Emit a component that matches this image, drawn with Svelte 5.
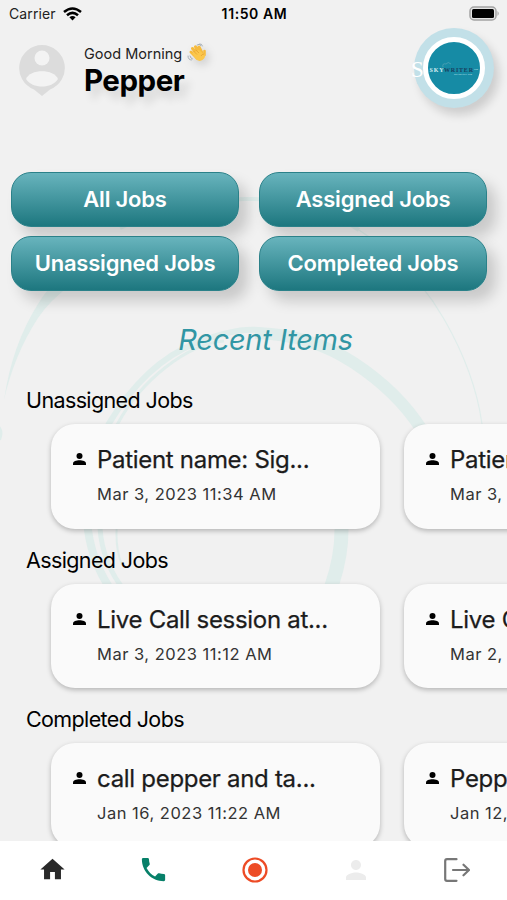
<script lang="ts">
	interface Job { title: string; date: string; }
	interface Section { name: string; jobs: Job[]; }

	const filters = ['All Jobs', 'Assigned Jobs', 'Unassigned Jobs', 'Completed Jobs'];

	const sections: Section[] = [
		{
			name: 'Unassigned Jobs',
			jobs: [
				{ title: 'Patient name: Sig...', date: 'Mar 3, 2023 11:34 AM' },
				{ title: 'Patient name: Sig...', date: 'Mar 3, 2023 11:30 AM' },
			],
		},
		{
			name: 'Assigned Jobs',
			jobs: [
				{ title: 'Live Call session at...', date: 'Mar 3, 2023 11:12 AM' },
				{ title: 'Live Call session at...', date: 'Mar 2, 2023 10:05 AM' },
			],
		},
		{
			name: 'Completed Jobs',
			jobs: [
				{ title: 'call pepper and ta...', date: 'Jan 16, 2023 11:22 AM' },
				{ title: 'Pepper call session...', date: 'Jan 12, 2023 11:02 AM' },
			],
		},
	];
</script>

<div class="phone">
	<!-- faint brush rings behind the content -->
	<svg class="rings" viewBox="0 0 507 584" aria-hidden="true">
		<g fill="none" stroke="#e0edeb">
			<path d="M0 440L0 428Q3 432 0 440" stroke-width="2" />
			<path d="M4 400Q12 345 38 304Q46 290 60 278L72 284Q50 300 38 318Q14 355 4 400Z" fill="#e0edeb" stroke="none" />
			<path d="M120 228Q180 200 245 199T359 230" stroke-width="4" />
			<path d="M359 230Q413 265 444 319T482 424" stroke-width="1.2" />
			<path d="M108 425Q145 363 196 343T270 333" stroke-width="6" />
			<path d="M117 425Q135 391 166 367T224 341" stroke-width="3" />
			<path d="M255 333Q310 334 354 363T422 430" stroke-width="12" />
			<path d="M87 500Q84 550 111 590" stroke-width="8" />
			<path d="M101 500Q94 552 124 590" stroke-width="5" />
			<path d="M120 500Q112 542 122 565" stroke-width="2" />
			<path d="M339 500Q347 545 330 590" stroke-width="14" />
		</g>
	</svg>

	<div class="status">
		<div class="carrier">
			<span>Carrier</span>
			<svg width="19" height="14" viewBox="0 0 19 14" fill="none" stroke="#000" stroke-width="2.5">
				<path d="M1 5Q9.500-2 18 5" />
				<path d="M4 8.300Q9.500 3.400 15 8.300" />
				<path d="M9.500 13.500L6.400 10.200Q9.500 7.800 12.600 10.200Z" fill="#000" stroke="none" />
			</svg>
		</div>
		<span class="clock">11:50 AM</span>
		<svg class="battery" width="31" height="15" viewBox="0 0 31 15">
			<rect x="1" y="1" width="26" height="13" rx="4" fill="#e4e4e4" stroke="#a3a3a3" stroke-width="1.500" />
			<rect x="3" y="3" width="22" height="9" rx="1.500" />
			<path d="M28.500 5Q31 7.500 28.500 10Z" fill="#a3a3a3" />
		</svg>
	</div>

	<header>
		<svg class="avatar" width="46" height="52" viewBox="0 0 46 52">
			<path d="M23 0A23 23 0 0 1 31 44.500L23 51L15 44.500A23 23 0 0 1 23 0Z" fill="#dcdcdc" />
			<circle cx="23" cy="13" r="7.500" fill="#f3f3f3" />
			<path d="M7 34C11 23.500 35 23.500 39 34C33 44 13 44 7 34Z" fill="#f3f3f3" />
		</svg>
		<div class="greeting">
			<div class="hello">
				<span>Good Morning</span>
				<svg width="20" height="20" viewBox="0 0 20 20">
					<g fill="none" stroke-linecap="round">
						<path d="M4 9L10 15M5.500 5.500L11 12M8.500 3.800L13 10M12 4L15 10" stroke="#f6bb3d" stroke-width="3" />
						<path d="M17.500 8V12" stroke="#f6bb3d" stroke-width="2.600" />
						<path d="M10 2Q12.500 0 14 2.500M12.500 1Q14.500 0 15.500 3M1 13Q1 17 4.500 17M3 13Q3.500 15.500 5.500 16" stroke="#a5adb5" stroke-width="1" />
					</g>
					<path d="M5 10L12 7L16 10.500Q19 11 17.500 15Q14 20 9 16.500Z" fill="#fbc74b" />
					<path d="M6.500 8L10 11.500M8.300 6.500L12 10M14 13Q15 11 17 11" stroke="#df9426" stroke-width=".6" fill="none" />
				</svg>
			</div>
			<h1>Pepper</h1>
		</div>
		<div class="logo">
			<span class="initial">S</span>
			<div class="disc">
				<svg viewBox="0 0 52 52" width="52" height="52">
					<path d="M15 25Q14 21 18 22Q20 19 23 22" fill="none" stroke="#73aebd" stroke-width=".5" />
					<text x="1.500" y="29.500" class="word" textLength="14" fill="#d6eef2">SKY</text>
					<text x="16" y="29.500" class="word" textLength="29" fill="#183d5e">WRITER</text>
					<text x="46" y="28" class="tiny" textLength="4">MD</text>
					<text x="26" y="32.500" class="tiny" textLength="18">Skywriter MD</text>
				</svg>
			</div>
		</div>
	</header>

	<div class="filters">
		{#each filters as name}
			<button>{name}</button>
		{/each}
	</div>

	<h2>Recent Items</h2>

	<main>
		{#each sections as section}
			<section>
				<h3>{section.name}</h3>
				<div class="row">
					{#each section.jobs as job}
						<article>
							<svg width="13" height="12" viewBox="0 0 13 12">
								<circle cx="6.500" cy="3" r="3" />
								<path d="M0 12V10.500C0 6.300 13 6.300 13 10.500V12Z" />
							</svg>
							<div>
								<p class="title">{job.title}</p>
								<p class="date">{job.date}</p>
							</div>
						</article>
					{/each}
				</div>
			</section>
		{/each}
	</main>

	<nav>
		<button aria-label="Home">
			<svg width="29" height="29" viewBox="0 0 24 24" fill="#292929">
				<path d="M10 20v-6h4v6h5v-8h3L12 3 2 12h3v8z" />
			</svg>
		</button>
		<button aria-label="Calls">
			<svg width="31" height="31" viewBox="0 0 24 24" fill="#078069">
				<path d="M6.620 10.790c1.440 2.830 3.760 5.140 6.590 6.590l2.200-2.200c.27-.27.67-.36 1.020-.24 1.120.37 2.330.57 3.570.57.55 0 1 .45 1 1V20c0 .55-.45 1-1 1-9.390 0-17-7.610-17-17 0-.55.45-1 1-1h3.500c.55 0 1 .45 1 1 0 1.250.2 2.450.57 3.570.11.35.03.74-.25 1.020z" />
			</svg>
		</button>
		<button aria-label="Record">
			<svg width="26" height="26" viewBox="0 0 26 26">
				<circle cx="13" cy="13" r="11.500" fill="none" stroke="#ed4b25" stroke-width="2.200" />
				<circle cx="13" cy="13" r="7" fill="#ed4b25" />
			</svg>
		</button>
		<button aria-label="Profile">
			<svg width="30" height="30" viewBox="0 0 24 24" fill="#ececec">
				<path d="M12 12c2.210 0 4-1.790 4-4s-1.790-4-4-4-4 1.790-4 4 1.790 4 4 4zm0 2c-2.670 0-8 1.340-8 4v2h16v-2c0-2.660-5.330-4-8-4z" />
			</svg>
		</button>
		<button aria-label="Log out">
			<svg width="26" height="24" viewBox="0 0 26 24" fill="none" stroke="#777" stroke-width="2.200" stroke-linecap="round" stroke-linejoin="round">
				<path d="M12.500 1.200H3Q1.200 1.200 1.200 3V21Q1.200 22.800 3 22.800H12.500M9 12H25M19.500 6.700L25 12L19.500 17.300" />
			</svg>
		</button>
	</nav>
</div>

<style>
	:global(body) {
		margin: 0;
	}

	.phone {
		position: relative;
		width: 507px;
		height: 900px;
		overflow: hidden;
		display: flex;
		flex-direction: column;
		background: #f1f1f1;
		font-family: Inter, "Liberation Sans", sans-serif;
		color: #000;
	}

	h1, h2, h3, p {
		margin: 0;
	}

	button {
		font: inherit;
		padding: 0;
		border: 0;
		background: none;
	}

	svg {
		display: block;
		flex: none;
	}

	.rings {
		position: absolute;
		top: 0;
		left: 0;
		width: 507px;
		height: 584px;
	}

	.status, header, .filters, h2, main, nav {
		position: relative;
		flex: none;
	}

	/* ── Status bar ── */
	.status {
		display: grid;
		grid-template-columns: 1fr auto 1fr;
		align-items: center;
		height: 27px;
		padding: 0 7px 0 9px;
		box-sizing: border-box;
		font-size: 14px;
	}
	.carrier {
		display: flex;
		align-items: center;
		gap: 7px;
		letter-spacing: 0.1px;
		color: #222;
	}
	.clock {
		font-weight: 600;
		font-size: 14px;
		letter-spacing: 0.6px;
	}
	.battery {
		justify-self: end;
	}

	/* ── Greeting ── */
	header {
		display: flex;
		align-items: flex-start;
		height: 145px;
		padding: 0 13px 0 19px;
	}
	.avatar {
		margin-top: 18px;
	}
	.greeting {
		margin: 16px 0 0 19px;
		flex: 1;
	}
	.hello {
		display: flex;
		align-items: center;
		gap: 5px;
		height: 20px;
		font-size: 14.5px;
		color: #222;
	}
	.hello svg {
		filter: drop-shadow(3px 4px 4px rgba(0, 0, 0, 0.15));
	}
	h1 {
		font-size: 29.5px;
		line-height: 35px;
		font-weight: 700;
		letter-spacing: -0.5px;
		text-shadow: 6px 8px 9px rgba(0, 0, 0, 0.12);
	}
	.logo {
		position: relative;
		display: grid;
		place-items: center;
		width: 80px;
		height: 80px;
		margin-top: 1px;
		border-radius: 50%;
		background: #c2e0e8;
		box-shadow: 5px 7px 10px rgba(0, 0, 0, 0.15);
	}
	.initial {
		position: absolute;
		left: -3px;
		top: 28px;
		font: 23px/28px "Liberation Serif", serif;
		color: #fff;
	}
	.disc {
		position: relative;
		width: 52px;
		height: 52px;
		border: 5px solid #fff;
		border-radius: 50%;
		background: #168ba5;
	}
	.word {
		font: bold 6px "Liberation Serif", serif;
	}
	.tiny {
		font: 2.5px "Liberation Sans", sans-serif;
		fill: #c3e7ed;
	}

	/* ── Filter buttons ── */
	.filters {
		display: grid;
		grid-template-columns: 228px 228px;
		gap: 9px 20px;
		padding-left: 11px;
	}
	.filters button {
		height: 55px;
		box-sizing: border-box;
		padding-bottom: 2px;
		border: 1.5px solid #2b8189;
		border-radius: 20px;
		background: linear-gradient(#68b4bd, #1d777f);
		box-shadow: 9px 10px 14px rgba(0, 0, 0, 0.17);
		color: #fff;
		font-size: 22px;
		font-weight: 600;
		letter-spacing: -0.2px;
	}

	h2 {
		margin: 31px 0 0 24px;
		font-size: 29px;
		line-height: 35px;
		font-style: italic;
		font-weight: 400;
		letter-spacing: -0.3px;
		text-align: center;
		color: #3196a4;
	}

	/* ── Job lists ── */
	main {
		flex: 1;
		min-height: 0;
		padding-top: 30px;
		overflow: hidden;
	}
	section {
		height: 159.5px;
	}
	h3 {
		padding-left: 26px;
		font-size: 21.5px;
		line-height: 26px;
		font-weight: 400;
		letter-spacing: -0.62px;
	}
	.row {
		display: flex;
		gap: 24px;
		padding: 11px 0 0 51px;
	}
	article {
		display: flex;
		flex: none;
		gap: 11px;
		width: 329px;
		height: 104.5px;
		padding-left: 22px;
		box-sizing: border-box;
		border-radius: 24px;
		background: #fafafa;
		box-shadow: 0 2px 5px rgba(0, 0, 0, 0.25);
	}
	article svg {
		margin-top: 29px;
	}
	.title {
		margin-top: 21px;
		font-size: 24px;
		line-height: 30px;
		letter-spacing: -0.3px;
		white-space: nowrap;
		color: #1c1c1c;
		-webkit-text-stroke: 0.25px #1c1c1c;
	}
	.date {
		margin-top: 8px;
		font-size: 16.5px;
		line-height: 22px;
		letter-spacing: 0.5px;
		white-space: nowrap;
		color: #333;
	}

	/* ── Tab bar ── */
	nav {
		display: grid;
		grid-template-columns: repeat(5, 1fr);
		height: 59px;
		padding: 0 0 2px 2px;
		box-sizing: border-box;
		background: #fff;
	}
	nav button {
		display: grid;
		place-items: center;
	}
</style>
